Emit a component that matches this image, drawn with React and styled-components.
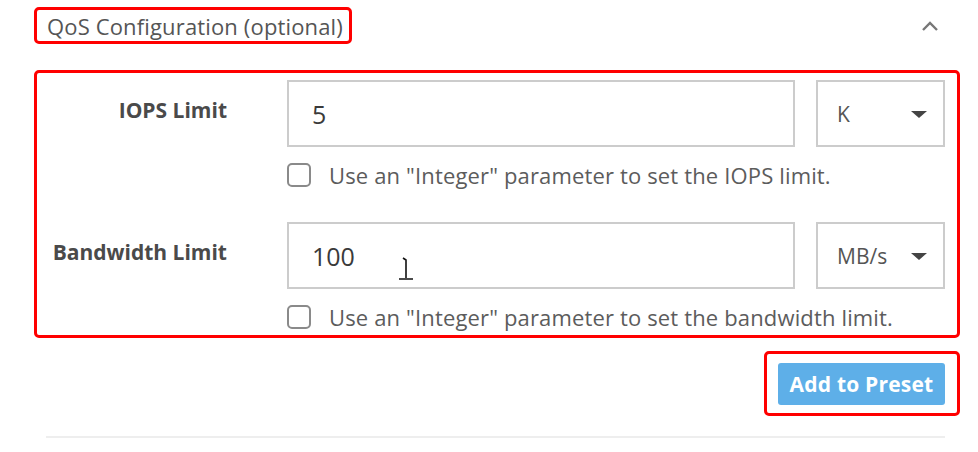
import styled, { createGlobalStyle } from 'styled-components'

const GlobalStyle = createGlobalStyle`
  body {
    margin: 0;
    background: #fff;
    font-family: 'Open Sans', 'Liberation Sans', sans-serif;
  }
`

const Field = ({ label, value, unit, hint, cursor }) => (
  <Row>
    <Label>{label}</Label>
    <FieldBody>
      <Inputs>
        <TextBox>
          {value}
          {cursor && (
            <Cursor width="16" height="24" viewBox="0 0 16 24">
              <path d="M5 1 L8 3 L8 21 M1 22 L15 22" fill="none" stroke="#111" strokeWidth="1.6" />
            </Cursor>
          )}
        </TextBox>
        <Select>
          <span>{unit}</span>
          <Caret />
        </Select>
      </Inputs>
      <CheckRow>
        <CheckBox />
        <CheckText>{hint}</CheckText>
      </CheckRow>
    </FieldBody>
  </Row>
)

export default function App() {
  return (
    <Page>
      <GlobalStyle />
      <Header>
        <Marked>
          <Title>QoS Configuration (optional)</Title>
        </Marked>
        <Chevron width="20" height="12" viewBox="0 0 20 12">
          <path d="M3 10 L10 3 L17 10" fill="none" stroke="#777" strokeWidth="2.4" />
        </Chevron>
      </Header>

      <FormBox>
        <Field
          label="IOPS Limit"
          value="5"
          unit="K"
          hint={'Use an "Integer" parameter to set the IOPS limit.'}
        />
        <Field
          label="Bandwidth Limit"
          value="100"
          unit="MB/s"
          hint={'Use an "Integer" parameter to set the bandwidth limit.'}
          cursor
        />
      </FormBox>

      <Footer>
        <ButtonBox>
          <Button>Add to Preset</Button>
        </ButtonBox>
      </Footer>
      <Divider />
    </Page>
  )
}

// Style
const Page = styled.div`
  width: 926px;
  padding: 7px 18px 0 34px;
`

const Header = styled.div`
  display: flex;
  align-items: center;
  justify-content: space-between;
  padding-right: 20px;
`

const Marked = styled.div`
  border: 3px solid #f00;
  border-radius: 5px;
  padding: 0 6px 0 10px;
  height: 31px;
  display: flex;
  align-items: center;
`

const Title = styled.span`
  font-size: 22px;
  line-height: 28px;
  letter-spacing: 0.15px;
  color: #555;
`

const Chevron = styled.svg`
  display: block;
`

const FormBox = styled.div`
  margin-top: 26px;
  border: 3px solid #f00;
  border-radius: 5px;
  padding: 7px 12px 6px 0;
  display: flex;
  flex-direction: column;
  gap: 35px;
`

const Row = styled.div`
  display: flex;
  align-items: flex-start;
`

const Label = styled.div`
  width: 190px;
  margin-right: 60px;
  padding-top: 17px;
  text-align: right;
  font-size: 21px;
  line-height: 26px;
  font-weight: 700;
  letter-spacing: 0;
  color: #4a4a4a;
  white-space: nowrap;
`

const FieldBody = styled.div`
  flex: 1;
  display: flex;
  flex-direction: column;
  gap: 16px;
`

const Inputs = styled.div`
  display: flex;
  gap: 21px;
  height: 67px;
`

const TextBox = styled.div`
  position: relative;
  flex: 1;
  box-sizing: border-box;
  border: 2px solid #ccc;
  display: flex;
  align-items: center;
  padding-left: 23px;
  font-size: 25px;
  line-height: 30px;
  color: #3a3a3a;
`

const Cursor = styled.svg`
  position: absolute;
  left: 109px;
  top: 33px;
`

const Select = styled.div`
  width: 129px;
  box-sizing: border-box;
  border: 2px solid #ccc;
  display: flex;
  align-items: center;
  justify-content: space-between;
  padding: 0 16px 0 19px;
  font-size: 21px;
  line-height: 26px;
  color: #555;
`

const Caret = styled.span`
  width: 0;
  height: 0;
  border-left: 8px solid transparent;
  border-right: 8px solid transparent;
  border-top: 7px solid #444;
  margin-top: 2px;
`

const CheckRow = styled.div`
  display: flex;
  align-items: center;
  gap: 18px;
  height: 24px;
`

const CheckBox = styled.span`
  width: 24px;
  height: 24px;
  box-sizing: border-box;
  border: 2px solid #8a8a8a;
  border-radius: 5px;
`

const CheckText = styled.span`
  font-size: 22px;
  line-height: 24px;
  letter-spacing: 0.15px;
  color: #5c5c5c;
  white-space: nowrap;
`

const Footer = styled.div`
  display: flex;
  justify-content: flex-end;
  margin-top: 13px;
`

const ButtonBox = styled.div`
  border: 3px solid #f00;
  border-radius: 5px;
  padding: 9px 12px 8px 11px;
`

const Button = styled.button`
  display: block;
  width: 167px;
  height: 42px;
  border: none;
  border-radius: 3px;
  background: #5eafe8;
  color: #fff;
  font-family: 'Open Sans', 'Liberation Sans', sans-serif;
  font-size: 21px;
  line-height: 26px;
  font-weight: 700;
  letter-spacing: 0.2px;
  padding: 0;
  white-space: nowrap;
`

const Divider = styled.div`
  margin: 20px 15px 0 12px;
  height: 2px;
  background: #eee;
`
